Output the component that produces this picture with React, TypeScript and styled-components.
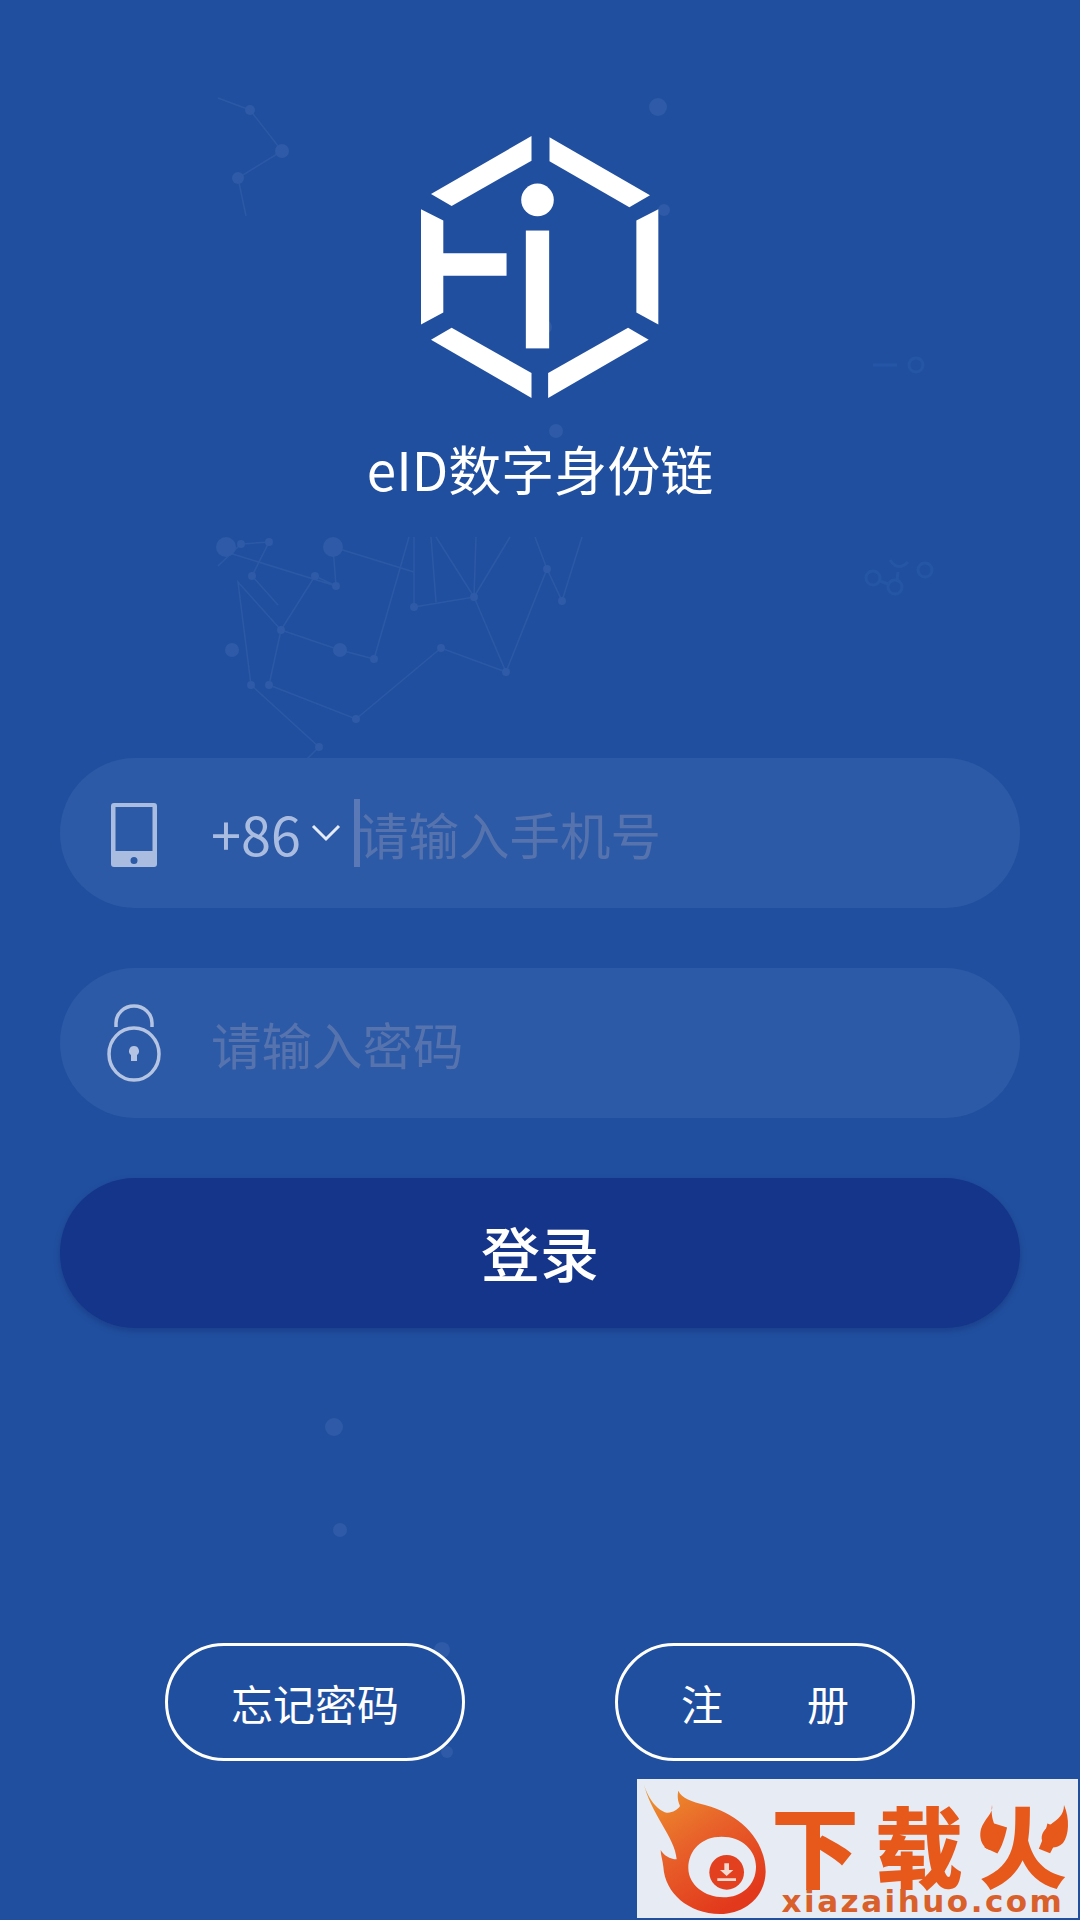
import React from 'react';
import styled, { createGlobalStyle } from 'styled-components';

const GlobalStyle = createGlobalStyle`
	html, body {
		margin: 0;
		padding: 0;
		background: #214f9f;
	}
	* {
		box-sizing: border-box;
	}
`;

const CJK = `"Noto Sans CJK SC", "Noto Sans", sans-serif`;

const Page = styled.div`
	position: relative;
	width: 1080px;
	height: 1920px;
	overflow: hidden;
	background: #214f9f;
	font-family: ${CJK};
	display: flex;
	flex-direction: column;
	align-items: center;
	padding: 135px 60px 0;
`;

const Backdrop = styled.svg`
	position: absolute;
	left: 0;
	top: 0;
	width: 1080px;
	height: 1920px;
`;

const Logo = styled.svg`
	position: relative;
	display: block;
	width: 238px;
	height: 264px;
`;

const Title = styled.div`
	position: relative;
	margin-top: 29px;
	height: 80px;
	line-height: 80px;
	font-size: 53px;
	color: #fff;
	white-space: nowrap;
`;

const Form = styled.div`
	position: relative;
	width: 100%;
	margin-top: 250px;
	display: flex;
	flex-direction: column;
	gap: 60px;
`;

const Field = styled.div`
	height: 150px;
	border-radius: 75px;
	background: #2c5aa7;
	display: flex;
	align-items: center;
`;

const IconSlot = styled.div<{ $inset: number; $drop?: number }>`
	width: 151px;
	padding-left: ${(p) => p.$inset}px;
	padding-top: ${(p) => p.$drop ?? 0}px;
	flex: none;
	display: flex;
	align-items: center;
`;

const Prefix = styled.div`
	font-size: 54px;
	color: #aabcdf;
	line-height: 1;
`;

const Chevron = styled.svg`
	width: 30px;
	height: 20px;
	margin-left: 10px;
`;

const Caret = styled.div`
	width: 6px;
	height: 68px;
	margin-left: 13px;
	margin-right: -2px;
	background: #5b79b6;
`;

const Placeholder = styled.div`
	font-size: 50.5px;
	line-height: 1;
	color: #5673ae;
`;

const LoginButton = styled.button`
	height: 150px;
	border: none;
	border-radius: 75px;
	background: #14358a;
	box-shadow: 0 3px 6px rgba(10, 30, 90, 0.3);
	color: #fff;
	font-family: ${CJK};
	font-size: 59px;
	font-weight: 500;
	padding: 0 0 4px;
`;

const LinkRow = styled.div`
	position: relative;
	margin-top: 315px;
	display: flex;
	gap: 150px;
`;

const LinkButton = styled.button`
	width: 300px;
	height: 118px;
	border: 3px solid #fff;
	border-radius: 59px;
	background: transparent;
	color: #fff;
	font-family: ${CJK};
	font-size: 42px;
	padding: 0;
`;

const Watermark = styled.div`
	position: absolute;
	left: 637px;
	top: 1779px;
	width: 441px;
	height: 139px;
	background: #e6ebf4;
	display: flex;
`;

const WatermarkMark = styled.svg`
	flex: none;
	width: 130px;
	height: 139px;
`;

const WatermarkText = styled.div`
	position: relative;
	display: flex;
	flex-direction: column;
	align-items: center;
	margin-left: -3px;
	width: 310px;
`;

const BrandName = styled.div`
	display: flex;
	gap: 16px;
	height: 84px;
	margin-top: 22px;
	font-size: 88px;
	font-weight: 900;
	line-height: 84px;
	color: #e6591a;
`;

const BrandUrl = styled.div`
	margin-top: 3px;
	margin-left: 8px;
	font-family: "DejaVu Sans", sans-serif;
	font-size: 31px;
	font-weight: 700;
	line-height: 26px;
	letter-spacing: 2.5px;
	color: #d9602a;
	white-space: nowrap;
`;

const Flames = styled.svg`
	position: absolute;
	left: 0;
	top: 0;
	width: 310px;
	height: 139px;
`;

// star map behind the form, page coordinates
const dots: [number, number, number][] = [
	[250, 110, 5], [282, 151, 7], [238, 178, 6],
	[226, 547, 10], [241, 544, 4], [269, 542, 4], [252, 576, 4], [315, 576, 4], [336, 586, 4],
	[333, 547, 10], [281, 630, 4], [232, 650, 7], [340, 650, 7], [374, 659, 4], [251, 685, 4],
	[269, 685, 4], [356, 719, 4], [319, 747, 4], [441, 648, 4], [506, 672, 4], [474, 597, 4],
	[414, 607, 4], [547, 569, 4], [562, 601, 4],
	[658, 107, 9], [556, 431, 7], [664, 210, 6], [545, 327, 7], [334, 1427, 9], [340, 1530, 7],
	[442, 1650, 8], [447, 1752, 6],
];

const lines: string[] = [
	'218,98 250,110 282,151 238,178 246,216',
	'218,566 241,544 269,542 252,576 278,605',
	'226,552 336,586 315,576 281,630 238,582 251,685 319,747',
	'281,630 340,650 374,659 409,537',
	'281,630 269,685 356,719 441,648 506,672 547,569 562,601 582,537',
	'333,547 336,586',
	'333,547 414,572',
	'414,607 474,597 506,672',
	'414,607 414,537',
	'431,537 436,602',
	'436,537 474,597 510,537',
	'474,597 476,537',
	'535,537 547,569',
	'319,747 306,760',
];

const PhoneIcon = () => (
	<svg width="46" height="64" viewBox="0 0 46 64">
		<path fill="#aabcdf" fillRule="evenodd" d="M3 0h40a3 3 0 0 1 3 3v58a3 3 0 0 1-3 3H3a3 3 0 0 1-3-3V3a3 3 0 0 1 3-3zm1.500 4v44h37V4zm18.500 50a3.500 3.500 0 1 0 0 7 3.500 3.500 0 0 0 0-7z" />
	</svg>
);

const LockIcon = () => (
	<svg width="54" height="78" viewBox="0 0 54 78">
		<g fill="none" stroke="#b4c4e2" strokeWidth="3.500">
			<ellipse cx="27" cy="50" rx="25" ry="26" />
			<path d="M9 23 V19 A18 17 0 0 1 45 19 V23" />
		</g>
		<path fill="#b4c4e2" d="M27 42a5 5 0 0 1 3 9v6h-6v-6a5 5 0 0 1 3-9z" />
	</svg>
);

const App = () => {
	return (
		<Page>
			<GlobalStyle />
			<Backdrop viewBox="0 0 1080 1920">
				{lines.map((l) => (
					<polyline key={l} points={l} fill="none" stroke="#2c59a6" strokeWidth="1.500" />
				))}
				{dots.map(([x, y, r]) => (
					<circle key={`${x}-${y}`} cx={x} cy={y} r={r} fill="#2e5aa7" />
				))}
				<g fill="none" stroke="#2556a6" strokeWidth="3">
					<path d="M873 365h24" />
					<circle cx="916" cy="365" r="7" />
					<circle cx="873" cy="578" r="7" />
					<circle cx="895" cy="587" r="7" />
					<circle cx="925" cy="570" r="7" />
					<path d="M880 581l8 3M897 580l1-8M890 560q8 12 18 2" />
				</g>
			</Backdrop>

			<Logo viewBox="120 75 715 793">
				<g fill="#fff">
					<polygon points="452,78 452,152 212,288 150,252" />
					<polygon points="506,82 506,154 746,292 808,256" />
					<polygon points="120,298 187,332 187,430 377,430 377,498 187,498 187,608 120,644" />
					<polygon points="833,298 767,332 767,608 833,644" />
					<polygon points="212,654 452,790 452,865 150,690" />
					<polygon points="742,654 502,790 502,865 804,690" />
					<rect x="435" y="362" width="70" height="354" />
					<circle cx="470" cy="270" r="49" />
				</g>
			</Logo>

			<Title>eID数字身份链</Title>

			<Form>
				<Field>
					<IconSlot $inset={51} $drop={3}>
						<PhoneIcon />
					</IconSlot>
					<Prefix>+86</Prefix>
					<Chevron viewBox="0 0 30 20">
						<path d="M2 3l13 13L28 3" fill="none" stroke="#e4eaf6" strokeWidth="3" />
					</Chevron>
					<Caret />
					<Placeholder>请输入手机号</Placeholder>
				</Field>
				<Field>
					<IconSlot $inset={47}>
						<LockIcon />
					</IconSlot>
					<Placeholder>请输入密码</Placeholder>
				</Field>
				<LoginButton>登录</LoginButton>
			</Form>

			<LinkRow>
				<LinkButton>忘记密码</LinkButton>
				<LinkButton>注　　册</LinkButton>
			</LinkRow>

			<Watermark>
				<WatermarkMark viewBox="21 27 390 417">
					<defs>
						<linearGradient id="flame" x1="0" y1="0" x2="0.6" y2="1">
							<stop offset="0" stopColor="#ee9a2c" />
							<stop offset="0.5" stopColor="#e8622a" />
							<stop offset="1" stopColor="#e2391c" />
						</linearGradient>
					</defs>
					<path
						fill="url(#flame)"
						fillRule="evenodd"
						d="M40 35C50 80 80 120 110 128C125 130 145 118 150 108C142 90 142 75 145 62C155 85 185 95 225 105C320 130 405 200 407 305C405 385 340 432 270 432C175 430 105 370 100 290C98 270 92 255 92 240C100 255 120 268 140 268C135 200 60 130 40 35ZM275 200C215 200 175 240 175 295C175 345 225 382 280 382C335 382 378 345 378 290C378 240 335 200 275 200Z"
					/>
					<circle cx="290" cy="307" r="52" fill="#e2401f" />
					<path d="M283 280h14v20h13l-20 18-20-18h13zM262 325h56v8h-56z" fill="#f3d9cf" />
				</WatermarkMark>
				<WatermarkText>
					<BrandName>
						<span>下</span>
						<span>载</span>
						<span>火</span>
					</BrandName>
					<BrandUrl>xiazaihuo.com</BrandUrl>
					<Flames viewBox="0 0 310 139">
						<path fill="#e6591a" d="M228 26c2 8-8 14-11 24-3 12 4 21 10 21 7 0 10-6 8-14-2-9-9-15-7-31z" />
						<path fill="#e6591a" d="M300 26c0 10-6 14-14 20-8 6-10 12-7 18 4 6 14 6 20 0 6-8 7-24 1-38z" />
					</Flames>
				</WatermarkText>
			</Watermark>
		</Page>
	);
};

export default App;
